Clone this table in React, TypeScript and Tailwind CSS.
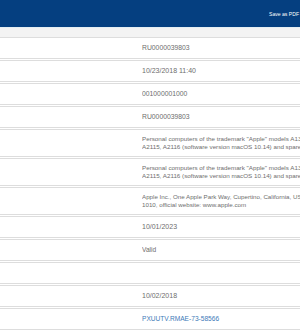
import React from 'react';

interface Row {
  lines: string[];
  size: string;
  link?: boolean;
}

const rows: Row[] = [
  { lines: ['RU0000039803'], size: 'text-[6.8px]' },
  { lines: ['10/23/2018 11:40'], size: 'text-[7px]' },
  { lines: ['001000001000'], size: 'text-[6.8px]' },
  { lines: ['RU0000039803'], size: 'text-[6.8px]' },
  {
    lines: [
      'Personal computers of the trademark "Apple" models A1347, A1418, A1419,',
      'A2115, A2116 (software version macOS 10.14) and spare parts',
    ],
    size: 'text-[6.25px]',
  },
  {
    lines: [
      'Personal computers of the trademark "Apple" models A1347, A1418, A1419,',
      'A2115, A2116 (software version macOS 10.14) and spare parts',
    ],
    size: 'text-[6.25px]',
  },
  {
    lines: [
      'Apple Inc., One Apple Park Way, Cupertino, California, USA, 95014,',
      '1010, official website: www.apple.com',
    ],
    size: 'text-[6.2px]',
  },
  { lines: ['10/01/2023'], size: 'text-[7px]' },
  { lines: ['Valid'], size: 'text-[6.6px]' },
  { lines: [''], size: 'text-[7px]' },
  { lines: ['10/02/2018'], size: 'text-[7px]' },
  { lines: ['PXUUTV.RMAE-73-58566'], size: 'text-[6.6px]', link: true },
];

export default function App() {
  return (
    <div className="w-[300px] h-[330px] overflow-hidden bg-white font-['Liberation_Sans',Arial,sans-serif]">
      <div className="h-[27px] bg-[#053f80] flex items-center justify-end pr-[1px]">
        <span className="text-white text-[5.1px] leading-[6px] whitespace-nowrap">Save as PDF</span>
      </div>
      <div className="h-[10px] bg-[#f3f3f3] border-t border-[#e4eef3]" />

      {rows.map((row, i) => (
        <div key={i} className="flex border-y border-[#dddddd] mb-px">
          <div className="w-[142px] shrink-0" />
          <div
            className={
              'flex-1 min-h-[20px] py-[5px] flex flex-col justify-center leading-[8px] overflow-hidden ' +
              row.size +
              (row.link ? ' text-[#3d7ab8]' : ' text-[#6e6e6e]')
            }
          >
            {row.lines.map((line, j) => (
              <span key={j} className="whitespace-nowrap">
                {line}
              </span>
            ))}
          </div>
        </div>
      ))}
    </div>
  );
}
